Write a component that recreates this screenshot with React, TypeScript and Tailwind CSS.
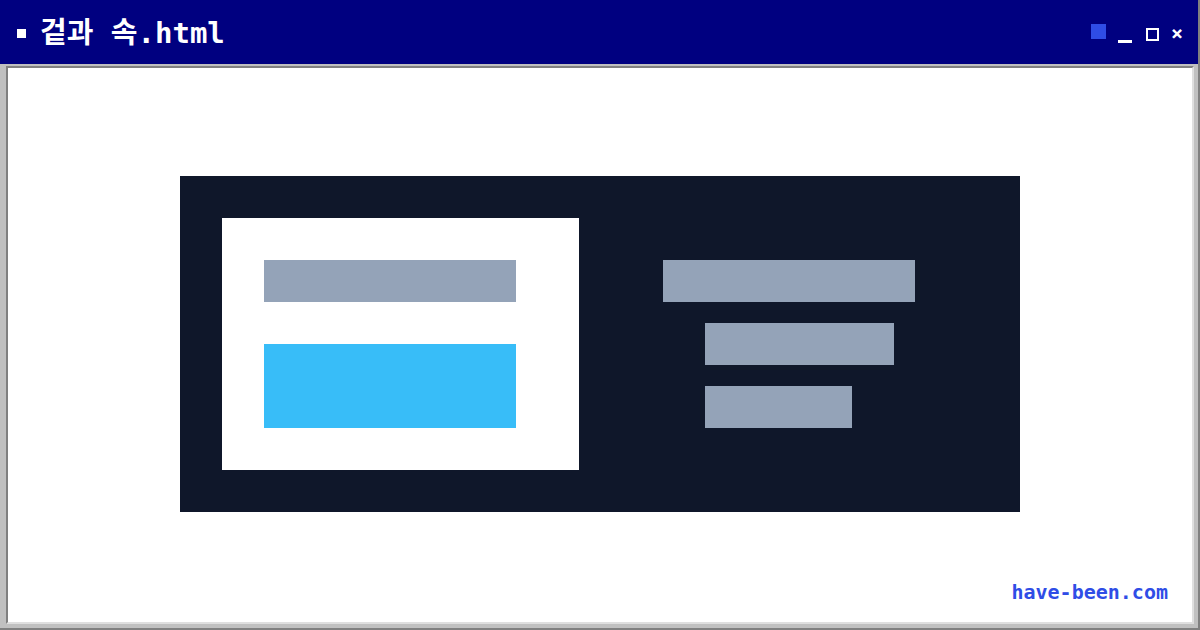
import React from "react";

export default function App() {
  const mono = { fontFamily: '"DejaVu Sans Mono", "Noto Sans CJK KR", monospace' };
  return (
    <div className="w-[1200px] h-[630px] bg-[#c0c0c0] border-r-2 border-b-2 border-[#808080] flex flex-col overflow-hidden">
      <div className="h-[64px] shrink-0 bg-[#000080] flex items-center pl-[17px] pr-[15px]" style={mono}>
        <div className="w-[9px] h-[9px] bg-white mt-[3px]" />
        <div className="ml-[14px] mt-[3px] text-white font-bold text-[29px] leading-none">겉과 속.html</div>
        <div className="ml-auto flex items-center">
          <div className="w-[15px] h-[15px] bg-[#2f4de6] mt-[-2px]" />
          <div className="ml-[12px] w-[14px] h-[3px] bg-white mt-[18px]" />
          <div className="ml-[14px] w-[13px] h-[13px] border-2 border-white mt-[4px]" />
          <div className="ml-[12px] text-white font-bold text-[20px] leading-none mt-[2px]">×</div>
        </div>
      </div>
      <div className="flex-1 flex pl-[6px] pt-[2px] pr-[4px] pb-[4px]">
        <div className="relative flex-1 bg-white border-t-2 border-l-2 border-[#808080] border-r-2 border-b-2 border-r-[#dfdfdf] border-b-[#dfdfdf] flex items-center justify-center">
          <div className="w-[840px] h-[336px] mb-[2px] bg-[#0f172a] p-[42px] flex">
            <div className="w-[357px] h-[252px] bg-white p-[42px] flex flex-col gap-[42px]">
              <div className="w-[252px] h-[42px] bg-[#94a3b8]" />
              <div className="w-[252px] h-[84px] bg-[#38bdf8]" />
            </div>
            <div className="ml-[84px] pt-[42px] flex flex-col gap-[21px]">
              <div className="w-[252px] h-[42px] bg-[#94a3b8]" />
              <div className="ml-[42px] w-[189px] h-[42px] bg-[#94a3b8]" />
              <div className="ml-[42px] w-[147px] h-[42px] bg-[#94a3b8]" />
            </div>
          </div>
          <div className="absolute right-[24px] bottom-[20px] text-[20px] font-bold leading-none text-[#2f4de6]" style={mono}>
            have-been.com
          </div>
        </div>
      </div>
    </div>
  );
}
